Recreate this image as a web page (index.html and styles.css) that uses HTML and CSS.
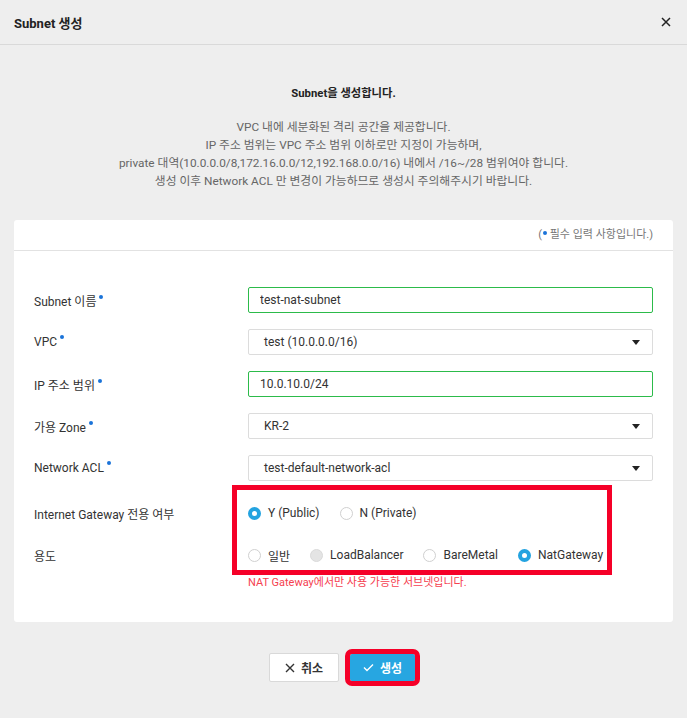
FILE: index.html
```html
<!DOCTYPE html>
<html lang="ko">
<head>
    <meta charset="UTF-8">
    <meta name="viewport" content="width=device-width, initial-scale=1.0">
    <title>Subnet 생성</title>
    <link rel="stylesheet" href="styles.css">
</head>
<body>
    <div class="modal">
        <div class="modal-header">
            <h2>Subnet 생성</h2>
            <button class="close" aria-label="닫기">
                <svg width="10" height="10" viewBox="0 0 10 10"><path d="M1 1L9 9M9 1L1 9" stroke="#222" stroke-width="1.5" fill="none"/></svg>
            </button>
        </div>

        <div class="modal-body">
            <div class="intro">
                <h3>Subnet을 생성합니다.</h3>
                <p>VPC 내에 세분화된 격리 공간을 제공합니다.</p>
                <p>IP 주소 범위는 VPC 주소 범위 이하로만 지정이 가능하며,</p>
                <p>private 대역(10.0.0.0/8,172.16.0.0/12,192.168.0.0/16) 내에서 /16~/28 범위여야 합니다.</p>
                <p>생성 이후 Network ACL 만 변경이 가능하므로 생성시 주의해주시기 바랍니다.</p>
            </div>

            <div class="card">
                <div class="card-head">(<span class="req"></span> 필수 입력 사항입니다.)</div>
                <div class="form">
                    <label class="label">Subnet 이름<span class="req"></span></label>
                    <input class="field valid" type="text" value="test-nat-subnet">

                    <label class="label">VPC<span class="req"></span></label>
                    <div class="field select">test (10.0.0.0/16)</div>

                    <label class="label">IP 주소 범위<span class="req"></span></label>
                    <input class="field valid" type="text" value="10.0.10.0/24">

                    <label class="label">가용 Zone<span class="req"></span></label>
                    <div class="field select">KR-2</div>

                    <label class="label">Network ACL<span class="req"></span></label>
                    <div class="field select">test-default-network-acl</div>

                    <div class="label radio-row first">Internet Gateway 전용 여부</div>
                    <div class="radios radio-row first">
                        <span class="option"><span class="radio checked"></span>Y (Public)</span>
                        <span class="option"><span class="radio"></span>N (Private)</span>
                    </div>

                    <div class="label radio-row">용도</div>
                    <div class="radios radio-row">
                        <span class="option"><span class="radio"></span>일반</span>
                        <span class="option"><span class="radio disabled"></span>LoadBalancer</span>
                        <span class="option"><span class="radio"></span>BareMetal</span>
                        <span class="option"><span class="radio checked"></span>NatGateway</span>
                    </div>

                    <div class="help">NAT Gateway에서만 사용 가능한 서브넷입니다.</div>
                </div>
                <!-- 강조 표시 -->
                <div class="highlight"></div>
            </div>

            <div class="actions">
                <button class="btn cancel">
                    <svg width="10" height="10" viewBox="0 0 10 10"><path d="M1 1L9 9M9 1L1 9" stroke="#333" stroke-width="1.4" fill="none"/></svg>
                    취소
                </button>
                <button class="btn primary">
                    <svg width="11" height="9" viewBox="0 0 11 9"><path d="M1 4.5L4 7.5L10 1.5" stroke="#fff" stroke-width="1.4" fill="none"/></svg>
                    생성
                </button>
            </div>
        </div>
    </div>
</body>
</html>
```

FILE: styles.css
```css
body {
    margin: 0;
    background: #eeeeee;
    font-family: Roboto, "Noto Sans CJK KR", sans-serif;
    color: #333;
}
.modal {
    width: 687px;
    height: 718px;
}
.modal-header {
    height: 44px;
    border-bottom: 1px solid #d9d9d9;
    display: flex;
    align-items: center;
    justify-content: space-between;
    padding: 0 14px;
}
.modal-header h2 {
    margin: 0;
    font-size: 13px;
    font-weight: bold;
    color: #222;
}
.close {
    border: none;
    background: none;
    padding: 0;
    width: 14px;
    height: 14px;
    display: flex;
    align-items: center;
    justify-content: center;
    cursor: pointer;
}
.intro {
    text-align: center;
    padding-top: 40px;
}
.intro h3 {
    margin: 0 0 15px;
    font-size: 11.3px;
    line-height: 18px;
    font-weight: bold;
    color: #222;
}
.intro p {
    margin: 0;
    font-size: 11.8px;
    line-height: 18px;
    color: #666;
}
.card {
    position: relative;
    margin: 30px 14px 0;
    background: white;
    border-radius: 3px;
}
.card-head {
    height: 30px;
    line-height: 30px;
    border-bottom: 1px solid #e2e2e2;
    text-align: right;
    padding-right: 20px;
    font-size: 11px;
    color: #777;
}
.req {
    display: inline-block;
    width: 4px;
    height: 4px;
    border-radius: 50%;
    background: #1a73d9;
    position: relative;
    top: -7px;
    margin-left: 3px;
}
.card-head .req {
    top: -3px;
    margin: 0 0 0 1px;
}
.form {
    display: grid;
    grid-template-columns: 214px 1fr;
    row-gap: 16px;
    padding: 36px 20px 33px;
    align-items: center;
}
.label {
    font-size: 12px;
}
.field {
    box-sizing: border-box;
    height: 26px;
    width: 100%;
    border: 1px solid #dcdcdc;
    border-radius: 2px;
    background: white;
    font-family: inherit;
    font-size: 12px;
    color: #333;
    padding: 0 11px;
    outline: none;
}
.field.valid {
    border-color: #2cbb4a;
}
.select {
    display: flex;
    align-items: center;
    padding-left: 15px;
    position: relative;
}
.select::after {
    content: "";
    position: absolute;
    right: 12px;
    top: 10px;
    border-left: 4px solid transparent;
    border-right: 4px solid transparent;
    border-top: 5px solid #222;
}
.radio-row {
    height: 28px;
    display: flex;
    align-items: center;
}
.radio-row.first {
    margin-top: 2px;
    margin-bottom: -2px;
}
.radios {
    gap: 20px;
}
.option {
    display: flex;
    align-items: center;
    font-size: 12px;
}
.radio {
    box-sizing: border-box;
    width: 13px;
    height: 13px;
    border-radius: 50%;
    border: 1px solid #d0d0d0;
    background: white;
    margin-right: 7px;
}
.radio.checked {
    border: 4px solid #23a3e0;
}
.radio.disabled {
    background: #e4e4e4;
    border-color: #dadada;
}
.help {
    grid-column: 2;
    margin-top: -12px;
    font-size: 11px;
    color: #f5404f;
}
.highlight {
    position: absolute;
    left: 218px;
    top: 265px;
    width: 380px;
    height: 90px;
    box-sizing: border-box;
    border: 5px solid #f50028;
    pointer-events: none;
}
.actions {
    display: flex;
    justify-content: center;
    align-items: center;
    gap: 11px;
    margin-top: 31px;
    padding-right: 3px;
}
.btn {
    display: flex;
    align-items: center;
    justify-content: center;
    gap: 6px;
    font-family: inherit;
    font-size: 12px;
    font-weight: bold;
    cursor: pointer;
    border-radius: 2px;
}
.cancel {
    width: 70px;
    height: 29px;
    background: white;
    border: 1px solid #d9d9d9;
    color: #333;
}
.primary {
    width: 65px;
    height: 27px;
    background: #27a6e1;
    border: none;
    color: white;
    outline: 5px solid #f50028;
}
```
